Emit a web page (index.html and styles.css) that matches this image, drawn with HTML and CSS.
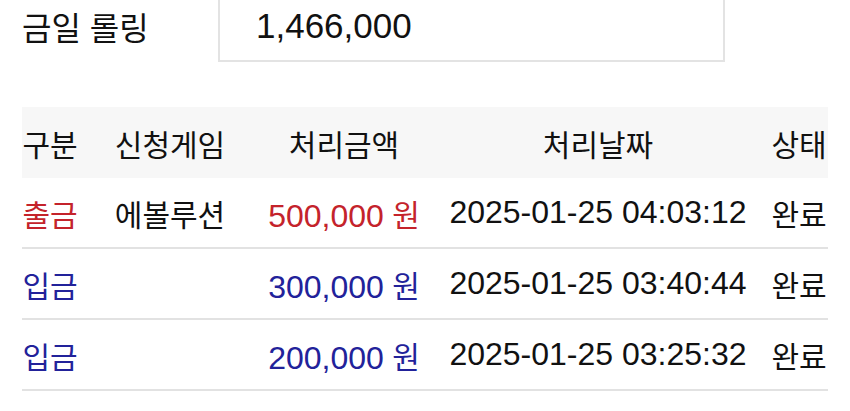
FILE: index.html
```html
<!DOCTYPE html>
<html lang="ko">
<head>
<meta charset="utf-8">
<link rel="stylesheet" href="styles.css">
</head>
<body>
<div class="page">
  <div class="rolling">
    <div class="rolling-label">금일 롤링</div>
    <div class="rolling-box">1,466,000</div>
  </div>
  <div class="table">
    <div class="row head">
      <div class="cell">구분</div>
      <div class="cell">신청게임</div>
      <div class="cell">처리금액</div>
      <div class="cell">처리날짜</div>
      <div class="cell">상태</div>
    </div>
    <div class="row">
      <div class="cell out">출금</div>
      <div class="cell">에볼루션</div>
      <div class="cell out"><span class="num">500,000</span> 원</div>
      <div class="cell"><span class="num">2025-01-25 04:03:12</span></div>
      <div class="cell">완료</div>
    </div>
    <div class="row">
      <div class="cell in">입금</div>
      <div class="cell"></div>
      <div class="cell in"><span class="num">300,000</span> 원</div>
      <div class="cell"><span class="num">2025-01-25 03:40:44</span></div>
      <div class="cell">완료</div>
    </div>
    <div class="row">
      <div class="cell in">입금</div>
      <div class="cell"></div>
      <div class="cell in"><span class="num">200,000</span> 원</div>
      <div class="cell"><span class="num">2025-01-25 03:25:32</span></div>
      <div class="cell">완료</div>
    </div>
  </div>
</div>
</body>
</html>
```

FILE: styles.css
```css
* { box-sizing: border-box; }
html, body { margin: 0; padding: 0; background: #fff; }
body {
  font-family: "Liberation Sans", "Noto Sans CJK KR", sans-serif;
  color: #111;
  overflow: hidden;
}
.page {
  margin-top: -10px;
  padding: 0 22px;
}
.rolling {
  display: flex;
  align-items: center;
}
.rolling-label {
  width: 196px;
  font-size: 32px;
  font-family: "Noto Sans CJK KR", sans-serif;
}
.rolling-box {
  width: 507px;
  height: 72px;
  border: 2px solid #e3e3e3;
  padding-left: 36px;
  display: flex;
  align-items: center;
  font-size: 35px;
}
.table {
  margin-top: 45px;
}
.row {
  display: grid;
  grid-template-columns: 56px 184px 164px 344px 58px;
  height: 71px;
  align-items: center;
  border-bottom: 2px solid #e2e2e2;
  font-size: 30px;
}
.row.head {
  background: #f7f7f7;
  border-bottom: none;
}
.cell {
  text-align: center;
  white-space: nowrap;
}
.num {
  font-size: 32px;
  vertical-align: -1px;
}
.out { color: #c4232b; }
.in { color: #22229a; }
```
